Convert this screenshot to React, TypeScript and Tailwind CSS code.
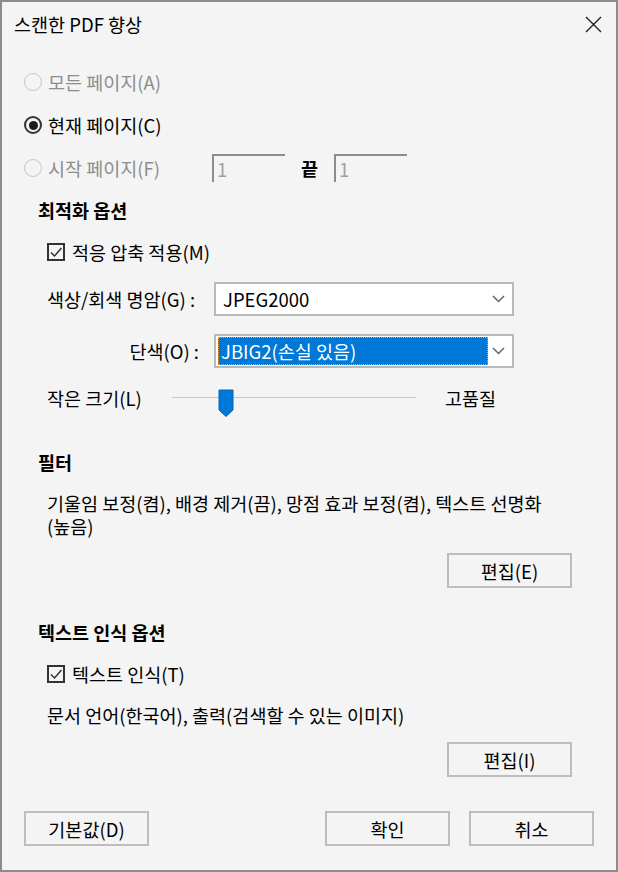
function Radio({ checked, disabled }: { checked?: boolean; disabled?: boolean }) {
  return (
    <div
      className={`flex h-[18px] w-[18px] items-center justify-center rounded-full bg-[#f4f4f4] ${
        disabled ? 'border border-[#c6c6c6]' : 'border-2 border-[#333]'
      }`}
    >
      {checked && <div className="h-[9px] w-[9px] rounded-full bg-[#1a1a1a]" />}
    </div>
  )
}

function Checkbox() {
  return (
    <div className="flex h-[18px] w-[18px] items-center justify-center border-2 border-[#333]">
      <svg width="14" height="14" viewBox="0 0 14 14">
        <path d="M2 7.5 L5.5 11 L12.5 3" fill="none" stroke="#333" strokeWidth="1.5" />
      </svg>
    </div>
  )
}

function Chevron() {
  return (
    <svg width="13" height="8" viewBox="0 0 13 8" className="shrink-0">
      <path d="M1 1 L6.5 6.5 L12 1" fill="none" stroke="#666" strokeWidth="1.5" />
    </svg>
  )
}

function Button({ label }: { label: string }) {
  return (
    <div className="flex h-[35px] w-[125px] items-center justify-center border-2 border-[#bdbdbd] bg-[#f4f4f4]">
      {label}
    </div>
  )
}

function PageInput() {
  return (
    <div className="flex h-[28px] w-[73px] items-center border-l-2 border-t-2 border-[#8c8c8c] pl-[3px] text-[#a0a0a0]">
      1
    </div>
  )
}

export default function App() {
  return (
    <main className="flex h-[872px] w-[618px] flex-col border-2 border-[#8c8c8c] bg-[#f4f4f4] font-['Noto_Sans_CJK_KR',sans-serif] text-[18.5px] leading-[24px] text-black">
      {/* title bar */}
      <div className="flex h-[44px] shrink-0 items-center justify-between pl-[12px] pr-[14px]">
        <span>스캔한 PDF 향상</span>
        <svg width="17" height="17" viewBox="0 0 17 17">
          <path d="M1 1 L16 16 M16 1 L1 16" stroke="#222" strokeWidth="1.4" />
        </svg>
      </div>

      {/* page range */}
      <div className="ml-[22px] mt-[21px] flex h-[30px] items-center gap-[6px] text-[#8d8d8d]">
        <Radio disabled />
        <span>모든 페이지(A)</span>
      </div>
      <div className="ml-[22px] mt-[13px] flex h-[30px] items-center gap-[6px]">
        <Radio checked />
        <span>현재 페이지(C)</span>
      </div>
      <div className="ml-[22px] mt-[13px] flex h-[30px] items-center">
        <div className="flex w-[188px] items-center gap-[6px] text-[#8d8d8d]">
          <Radio disabled />
          <span>시작 페이지(F)</span>
        </div>
        <PageInput />
        <span className="ml-[16px] mr-[16px] font-bold">끝</span>
        <PageInput />
      </div>

      {/* optimization */}
      <div className="ml-[36px] mt-[15px] h-[24px] font-bold">최적화 옵션</div>
      <div className="ml-[45px] mt-[18px] flex h-[24px] items-center gap-[7px]">
        <Checkbox />
        <span>적응 압축 적용(M)</span>
      </div>

      <div className="ml-[45px] mt-[18px] flex h-[34px] items-center">
        <span className="w-[167px]">색상/회색 명암(G) :</span>
        <div className="flex h-[34px] w-[300px] items-center justify-between border-2 border-[#b9b9b9] bg-white pl-[7px] pr-[7px]">
          <span>JPEG2000</span>
          <Chevron />
        </div>
      </div>

      <div className="ml-[45px] mt-[18px] flex h-[34px] items-center">
        <span className="w-[167px] pr-[15px] text-right">단색(O) :</span>
        <div className="flex h-[34px] w-[300px] items-center justify-between border-2 border-[#b9b9b9] bg-white pl-[2px] pr-[7px]">
          <div className="flex h-[28px] w-[270px] items-center border border-dotted border-[#f0a040] bg-[#0078d7] pl-[2px] text-white">
            JBIG2(손실 있음)
          </div>
          <Chevron />
        </div>
      </div>

      <div className="ml-[45px] mt-[16px] flex h-[28px] items-center">
        <span className="w-[125px]">작은 크기(L)</span>
        <div className="relative h-[28px] w-[244px]">
          <div className="absolute left-0 right-0 top-[13px] h-px bg-[#c8c8c8]" />
          <svg className="absolute left-[46px] top-[5px]" width="16" height="28" viewBox="0 0 16 28">
            <path d="M1 1 H15 V21 L8 27.5 L1 21 Z" fill="#0078d7" stroke="#0067b8" strokeWidth="1" />
          </svg>
        </div>
        <span className="ml-[29px]">고품질</span>
      </div>

      {/* filters */}
      <div className="ml-[36px] mt-[38px] h-[24px] font-bold">필터</div>
      <p className="ml-[45px] mt-[18px] w-[528px] break-keep leading-[23px]">
        기울임 보정(켬), 배경 제거(끔), 망점 효과 보정(켬), 텍스트 선명화 (높음)
      </p>
      <div className="mt-[15px] flex justify-end pr-[44px]">
        <Button label="편집(E)" />
      </div>

      {/* text recognition */}
      <div className="ml-[36px] mt-[32px] h-[24px] font-bold">텍스트 인식 옵션</div>
      <div className="ml-[45px] mt-[18px] flex h-[24px] items-center gap-[7px]">
        <Checkbox />
        <span>텍스트 인식(T)</span>
      </div>
      <div className="ml-[45px] mt-[17px] h-[24px]">문서 언어(한국어), 출력(검색할 수 있는 이미지)</div>
      <div className="mt-[15px] flex justify-end pr-[44px]">
        <Button label="편집(I)" />
      </div>

      {/* footer */}
      <div className="mt-[34px] flex items-center justify-between pl-[22px] pr-[22px]">
        <Button label="기본값(D)" />
        <div className="flex gap-[19px]">
          <Button label="확인" />
          <Button label="취소" />
        </div>
      </div>
    </main>
  )
}
